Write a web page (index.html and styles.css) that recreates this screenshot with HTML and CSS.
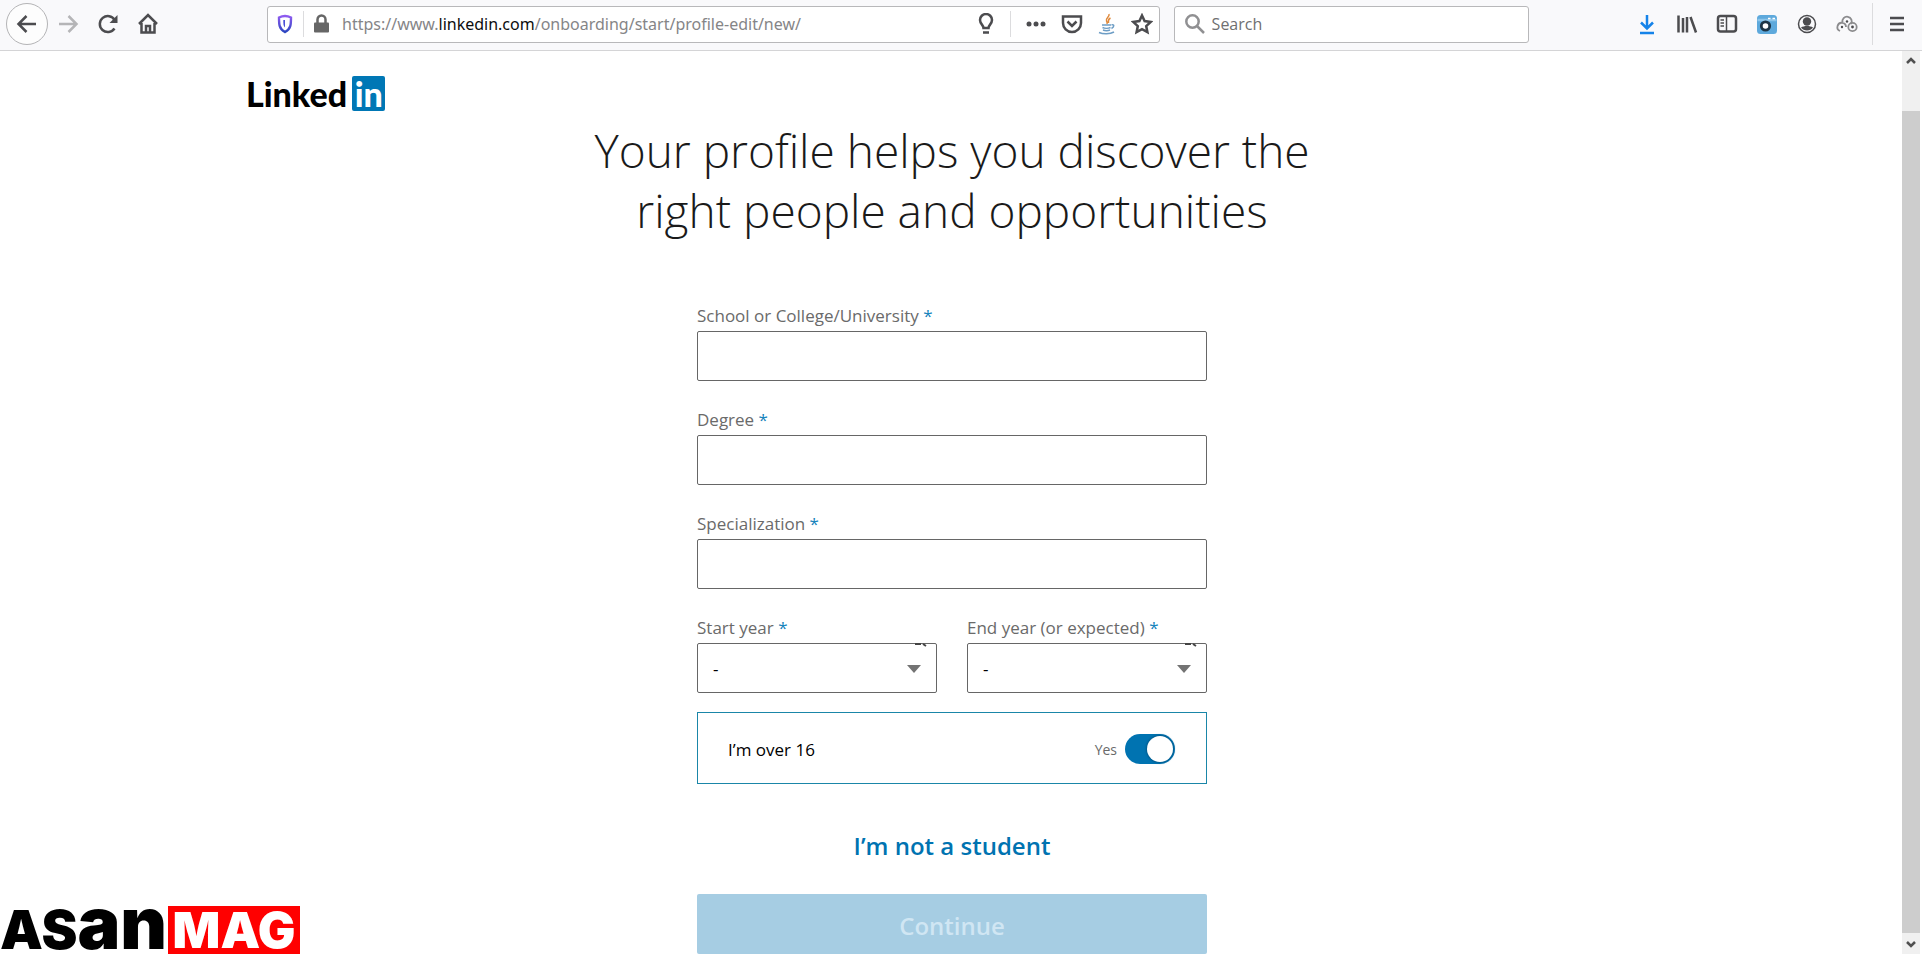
FILE: index.html
```
<!DOCTYPE html>
<html lang="en">
<head>
    <meta charset="UTF-8">
    <meta name="viewport" content="width=device-width, initial-scale=1.0">
    <title>LinkedIn - Profile edit</title>
    <link rel="stylesheet" href="styles.css">
</head>

<body>

<!-- browser toolbar -->
<div class="toolbar">
    <div class="navBtns">
        <button class="iconBtn backBtn" aria-label="Back">
            <svg width="24" height="24" viewBox="0 0 24 24"><path d="M21 12H3.500M11.500 4L3.500 12l8 8"/></svg>
        </button>
        <button class="iconBtn forwardBtn" aria-label="Forward" disabled>
            <svg width="24" height="24" viewBox="0 0 24 24"><path d="M3 12h17.500M12.500 4l8 8-8 8"/></svg>
        </button>
        <button class="iconBtn" aria-label="Reload">
            <svg width="24" height="24" viewBox="0 0 24 24"><path d="M18.500 16.500a8 8 0 1 1 .2-8.500"/><path class="fill" d="M21.500 3v8h-8z"/></svg>
        </button>
        <button class="iconBtn" aria-label="Home">
            <svg width="24" height="24" viewBox="0 0 24 24"><path d="M3 12l9-9 9 9M5.500 11v9.500h13V11M10 20v-6h4v6"/></svg>
        </button>
    </div>

    <div class="urlBar">
        <svg class="shield" width="20" height="20" viewBox="0 0 20 20">
            <defs>
                <linearGradient id="shieldColor" x1="0" y1="0" x2="0" y2="1">
                    <stop offset="0" stop-color="#8f5bf0"/>
                    <stop offset="1" stop-color="#2b45c0"/>
                </linearGradient>
            </defs>
            <path d="M10 2c2 0 4 .5 6 1.500 0 7 0 11-6 14.500C4 14.500 4 10.500 4 3.500 6 2.500 8 2 10 2z" fill="none" stroke="url(#shieldColor)" stroke-width="2.400"/>
            <path class="shieldIn" d="M10 6v7.500C8.300 12 8.300 10 8.300 6z"/>
        </svg>
        <span class="sep"></span>
        <svg class="lock" width="20" height="20" viewBox="0 0 20 20">
            <path d="M6.500 9V5.500a4 4 0 0 1 8 0V9"/>
            <rect class="fill" x="3" y="8.500" width="15" height="10" rx="1"/>
        </svg>
        <div class="url">https://www.<b>linkedin.com</b>/onboarding/start/profile-edit/new/</div>
        <div class="urlIcons">
            <svg width="20" height="22" viewBox="0 0 20 22"><path d="M7.500 15c0-3-3.500-4-3.500-8a6 6 0 0 1 12 0c0 4-3.500 5-3.500 8zM7 19.500h6"/></svg>
            <span class="sep"></span>
            <svg width="22" height="22" viewBox="0 0 22 22"><g class="fill"><circle cx="4" cy="11" r="2.500"/><circle cx="11" cy="11" r="2.500"/><circle cx="18" cy="11" r="2.500"/></g></svg>
            <svg width="22" height="22" viewBox="0 0 22 22"><path d="M2 3.500h18v6.500a9 9 0 0 1-18 0zM6.500 8.500L11 13l4.500-4.500"/></svg>
            <svg class="java" width="20" height="22" viewBox="0 0 20 22">
                <path class="steam" d="M12 1c1 3-4 4-2.500 7 .5 1 1 1.500.5 3M13.500 5c-3 1.500-2 3-2 5"/>
                <path class="cup" d="M5 12h9M5.500 14.500c2 1 6 1 8 0M6 17c2 .8 5 .8 7 0M14.500 12c3-1 3 2 0 3.500M2 19.500c4 1.800 11 1.800 15-.5"/>
            </svg>
            <svg width="22" height="22" viewBox="0 0 22 22"><path d="M11 2.500l2.600 5.600 6.100.8-4.500 4.200 1.200 6.100L11 16.200l-5.400 3 1.200-6.100L2.300 8.900l6.100-.8z"/></svg>
        </div>
    </div>

    <label class="searchBar">
        <svg width="22" height="22" viewBox="0 0 22 22"><circle cx="8.500" cy="8.500" r="6.200"/><path d="M13 13l7 7"/></svg>
        <input type="text" placeholder="Search" aria-label="Search">
    </label>

    <div class="tools">
        <button class="iconBtn download" aria-label="Downloads">
            <svg width="24" height="24" viewBox="0 0 24 24"><path d="M12 3v13M6 10.500l6 6 6-6M5 21h14"/></svg>
        </button>
        <button class="iconBtn" aria-label="Library">
            <svg width="24" height="24" viewBox="0 0 24 24"><path d="M3.500 3.500v17M8 6v14.500M12 5v15.500M15.500 5l5.500 15.500"/></svg>
        </button>
        <button class="iconBtn" aria-label="Sidebars">
            <svg width="24" height="24" viewBox="0 0 24 24"><rect x="3" y="4" width="18" height="15.500" rx="2.500"/><path class="thin" d="M11.500 4v15M5.500 8h3.500M5.500 11h3.500M5.500 14h3.500"/></svg>
        </button>
        <button class="iconBtn" aria-label="Screenshot">
            <svg class="camera" width="24" height="24" viewBox="0 0 24 24">
                <rect x="2" y="3" width="20" height="19" rx="3.500" fill="#5ea9dc" stroke="none"/>
                <path d="M2.500 8h19" stroke="#8cc5ea"/>
                <path d="M13 6.500h2.500M17.500 6.500H20" stroke="#fff" stroke-width="1.500"/>
                <circle cx="10.500" cy="14" r="4.200" fill="#fff" stroke="#1d3547" stroke-width="2.800"/>
            </svg>
        </button>
        <button class="iconBtn" aria-label="Account">
            <svg width="24" height="24" viewBox="0 0 24 24"><circle class="thin" cx="12" cy="12" r="8.500"/><circle class="fill" cx="12" cy="9.500" r="4.200"/><path class="fill" d="M6 15.500c3-2 9-2 12 0-2.500 4-9.500 4-12 0z"/></svg>
        </button>
        <button class="iconBtn" aria-label="Extension">
            <svg class="cloud" width="24" height="24" viewBox="0 0 24 24">
                <path d="M5 19a4.300 4.300 0 1 1 6-4M7.500 10.500a4.700 4.700 0 1 1 8.500 1.500"/>
                <circle cx="17.500" cy="15" r="4.200"/>
                <g class="fill"><circle cx="7" cy="15" r="1.200"/><circle cx="12" cy="9.500" r="1.200"/><circle cx="17.500" cy="15" r="1.400"/></g>
            </svg>
        </button>
        <span class="sep tall"></span>
        <button class="iconBtn menuBtn" aria-label="Menu">
            <svg width="24" height="24" viewBox="0 0 24 24"><path d="M5 6h14M5 12h14M5 18h14"/></svg>
        </button>
    </div>
</div>

<!-- page -->
<div class="view">
    <div class="page">
        <header class="header">
            <a class="logo" href="#" aria-label="LinkedIn">Linked<span class="logoIn">in</span></a>
        </header>

        <main>
            <h1>Your profile helps you discover the<br>right people and opportunities</h1>

            <form class="form">
                <div class="field">
                    <label for="school">School or College/University <i>*</i></label>
                    <input type="text" id="school">
                </div>
                <div class="field">
                    <label for="degree">Degree <i>*</i></label>
                    <input type="text" id="degree">
                </div>
                <div class="field">
                    <label for="spec">Specialization <i>*</i></label>
                    <input type="text" id="spec">
                </div>
                <div class="years">
                    <div class="field">
                        <label for="startYear">Start year <i>*</i></label>
                        <div class="selectBox">
                            <select id="startYear"><option>-</option></select>
                            <svg class="mark" width="14" height="4" viewBox="0 0 14 4"><path d="M1 1h6M9 1l3 2"/></svg>
                            <svg class="arrow" width="14" height="8" viewBox="0 0 14 8"><path d="M0 0h14L7 8z"/></svg>
                        </div>
                    </div>
                    <div class="field">
                        <label for="endYear">End year (or expected) <i>*</i></label>
                        <div class="selectBox">
                            <select id="endYear"><option>-</option></select>
                            <svg class="mark" width="14" height="4" viewBox="0 0 14 4"><path d="M1 1h6M9 1l3 2"/></svg>
                            <svg class="arrow" width="14" height="8" viewBox="0 0 14 8"><path d="M0 0h14L7 8z"/></svg>
                        </div>
                    </div>
                </div>

                <div class="ageBox">
                    <label for="over16">I’m over 16</label>
                    <span class="yes">Yes</span>
                    <input type="checkbox" id="over16" class="toggle" checked>
                </div>

                <button type="button" class="linkBtn">I’m not a student</button>
                <button type="submit" class="continueBtn" disabled>Continue</button>
            </form>
        </main>
    </div>

    <div class="scrollbar">
        <svg width="18" height="18" viewBox="0 0 18 18"><path d="M5 12l4-4 4 4"/></svg>
        <div class="thumb"></div>
        <svg width="18" height="18" viewBox="0 0 18 18"><path d="M5 6l4 4 4-4"/></svg>
    </div>
</div>

<!-- watermark -->
<div class="watermark">
    <span class="asan">AS<small>an</small></span>
    <span class="mag">MAG</span>
</div>

</body>
</html>
```
FILE: styles.css
```
* {
    box-sizing: border-box;
    font-family: "Open Sans", "Noto Sans", sans-serif;
}

body {
    margin: 0;
    height: 100vh;
    overflow: hidden;
    display: flex;
    flex-direction: column;
    background-color: #fff;
    color: #000;
}

button {
    border: none;
    background: none;
    padding: 0;
}

svg {
    display: block;
    flex: none;
}

/* toolbar */
.toolbar {
    height: 51px;
    flex: none;
    display: flex;
    align-items: center;
    padding: 0 5px 2px 6px;
    background-color: #f9f9fb;
    border-bottom: 1px solid #d4d4d6;
}

.toolbar svg {
    fill: none;
    stroke: #4c4c4f;
    stroke-width: 2.5;
}

.toolbar svg .fill {
    fill: #4c4c4f;
    stroke: none;
}

.toolbar svg .thin {
    stroke-width: 1.5;
}

.iconBtn {
    width: 40px;
    height: 42px;
    display: flex;
    align-items: center;
    justify-content: center;
}

.navBtns {
    display: flex;
    width: 261px;
}

.backBtn {
    width: 42px;
    border: 1px solid #b4b4b6;
    border-radius: 50%;
    background-color: #fdfdfd;
}

.toolbar .forwardBtn svg {
    stroke: #b5b5b7;
}

.urlBar,
.searchBar {
    height: 37px;
    display: flex;
    align-items: center;
    background-color: #fff;
    border: 1px solid #b8b8ba;
    border-radius: 3px;
}

.urlBar {
    flex: 897;
    padding: 0 6px 0 7px;
}

.sep {
    width: 1px;
    height: 26px;
    background-color: #dcdcde;
}

.tall {
    height: 42px;
    margin-left: 5px;
}

.shield {
    margin-right: 8px;
}

.shieldIn {
    fill: #4a50d8;
    stroke: none;
}

.toolbar .lock {
    margin: 0 11px 0 7px;
    stroke: #666;
}

.toolbar .lock .fill {
    fill: #666;
}

.url,
.url b {
    font-family: "Noto Sans", "Open Sans", sans-serif;
}

.url {
    flex: 1;
    font-size: 16px;
    color: #858587;
    white-space: nowrap;
}

.url b {
    font-weight: normal;
    color: #0c0c0d;
}

.urlIcons {
    display: flex;
    align-items: center;
    gap: 14px;
}

.toolbar .java {
    stroke-width: 1.5;
}

.steam {
    stroke: #e08a3c;
}

.cup {
    stroke: #6d9dc5;
}

.searchBar {
    flex: 352;
    margin-left: 14px;
    padding-left: 9px;
}

.toolbar .searchBar svg {
    stroke: #909092;
}

.searchBar input {
    flex: 1;
    min-width: 0;
    margin-left: 6px;
    padding: 0;
    border: none;
    outline: none;
    font-size: 16px;
}

.searchBar input::placeholder {
    color: #6f6f71;
}

.tools {
    display: flex;
    align-items: center;
    margin-left: 98px;
}

.toolbar .download svg {
    stroke: #1583e9;
}

.toolbar .cloud {
    stroke: #8c8c8e;
    stroke-width: 1.8;
}

.menuBtn {
    margin-left: 4px;
}

/* page */
.view {
    flex: 1;
    min-height: 0;
    display: flex;
    padding-right: 2px;
}

.page {
    flex: 1;
    overflow: hidden;
}

.header {
    max-width: 1412px;
    margin: 25px auto 0;
}

.logo {
    display: inline-flex;
    align-items: center;
    gap: 5px;
    height: 35px;
    vertical-align: top;
    font-family: Lato, sans-serif;
    font-size: 34px;
    font-weight: 900;
    line-height: 35px;
    color: #000;
    text-decoration: none;
}

.logoIn {
    width: 33px;
    border-radius: 2px;
    background-color: #0077b5;
    color: #fff;
    font-family: Lato, sans-serif;
    text-align: center;
}

h1 {
    margin: 9px 0 64px;
    text-align: center;
    font-size: 46px;
    font-weight: 300;
    line-height: 60px;
    color: #1a1a1a;
}

.form {
    max-width: 510px;
    margin: 0 auto;
    display: flex;
    flex-direction: column;
}

.field {
    flex: 1;
    display: flex;
    flex-direction: column;
    gap: 3px;
    margin-bottom: 27px;
}

.field label {
    font-size: 17px;
    line-height: 24px;
    color: #6a6a6a;
}

.field i {
    font-style: normal;
    color: #1583bb;
}

.field input,
.field select {
    width: 100%;
    height: 50px;
    padding: 0 15px;
    border: 1px solid #666;
    border-radius: 2px;
    background-color: #fff;
    font-size: 17px;
    color: #000;
}

.field select {
    appearance: none;
}

.years {
    display: flex;
    gap: 30px;
}

.years .field {
    margin-bottom: 19px;
}

.selectBox {
    position: relative;
}

.arrow {
    position: absolute;
    right: 16px;
    top: 22px;
    fill: #737373;
}

.mark {
    position: absolute;
    right: 9px;
    top: 0;
    fill: none;
    stroke: #444;
    stroke-width: 2;
}

.ageBox {
    height: 72px;
    display: flex;
    align-items: center;
    padding: 2px 31px 0 30px;
    border: 1px solid #1a86a8;
}

.ageBox label {
    flex: 1;
    font-size: 17px;
}

.yes {
    margin-right: 8px;
    font-size: 14px;
    color: #6a6a6a;
}

.toggle {
    appearance: none;
    width: 50px;
    height: 30px;
    margin: 0;
    padding: 2px;
    display: flex;
    justify-content: flex-end;
    border-radius: 15px;
    background-color: #0073b1;
}

.toggle::before {
    content: "";
    width: 26px;
    height: 26px;
    border-radius: 50%;
    background-color: #fff;
    box-shadow: 0 0 2px 1px #005a8c;
}

.linkBtn {
    height: 40px;
    margin: 41px 0 29px;
    font-size: 24px;
    font-weight: 600;
    color: #0073b1;
}

.continueBtn {
    height: 60px;
    padding-top: 3px;
    border-radius: 2px;
    background-color: #a6cde3;
    font-size: 24px;
    font-weight: 600;
    color: #d0e6f3;
}

/* scrollbar */
.scrollbar {
    width: 18px;
    margin-left: -2px;
    display: flex;
    flex-direction: column;
    justify-content: space-between;
    background-color: #f0f0f0;
    z-index: 1;
}

.scrollbar svg {
    fill: none;
    stroke: #505050;
    stroke-width: 2.5;
}

.thumb {
    flex: 1;
    margin: 42px 0 3px;
    background-color: #cdcdcd;
}

/* watermark */
.watermark {
    position: fixed;
    left: 0;
    bottom: 0;
    height: 48px;
    display: flex;
    gap: 2px;
}

.watermark span,
.watermark small {
    font-family: Inter, "Liberation Sans", sans-serif;
    font-weight: 900;
    line-height: 48px;
}

.asan {
    width: 166px;
    font-size: 54px;
}

.watermark small {
    font-size: 72px;
    line-height: 0;
}

.mag {
    width: 132px;
    background-color: #f00;
    color: #fff;
    font-size: 50px;
    text-align: center;
}
```
